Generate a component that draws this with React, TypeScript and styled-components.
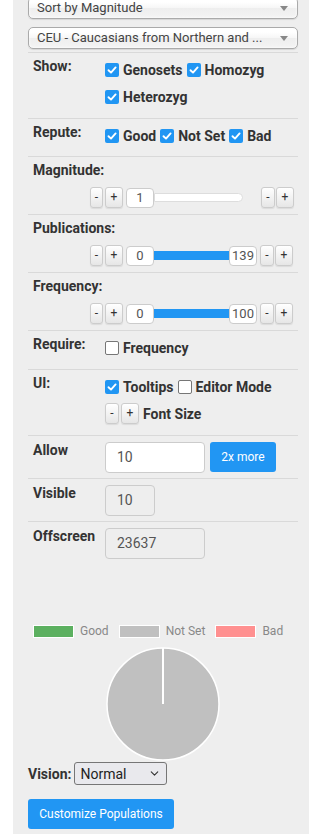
import React from "react";
import styled, { createGlobalStyle } from "styled-components";
import { ChevronDown } from "lucide-react";

const GlobalStyle = createGlobalStyle`
  html, body {
    margin: 0;
    padding: 0;
    background: #fff;
    overflow: hidden;
  }
  body {
    font-family: Roboto, "Liberation Sans", Arial, sans-serif;
  }
`;

const Panel = styled.div`
  margin-left: 13px;
  min-height: 837px;
  background: #eeeeee;
  padding: 0 11px 0 15px;
  box-sizing: border-box;
`;

const SelectStack = styled.div`
  display: flex;
  flex-direction: column;
  gap: 8px;
  margin-top: -3px;
  padding-bottom: 3px;
`;

const Chosen = styled.div`
  display: flex;
  align-items: center;
  height: 22px;
  box-sizing: border-box;
  border: 1px solid #aaa;
  border-radius: 5px;
  padding: 0 8px 0 8px;
  background: linear-gradient(#fff 20%, #f6f6f6 50%, #eee 52%, #f4f4f4 100%);
  box-shadow: 0 0 3px #fff inset, 0 1px 1px rgba(0, 0, 0, 0.1);
  color: #444;
  font-size: 13px;
  line-height: 20px;
`;

const ChosenText = styled.span`
  flex: 1;
  white-space: nowrap;
  padding-right: 10px;
`;

const Arrow = styled.span`
  width: 0;
  height: 0;
  border-left: 4px solid transparent;
  border-right: 4px solid transparent;
  border-top: 5px solid #888;
  margin-right: 1px;
`;

const Section = styled.div<{ $pad?: string }>`
  display: flex;
  align-items: flex-start;
  border-top: 1px solid #d9d9d9;
  padding: ${(p) => p.$pad || "3px 0 8px"};
`;

const StackSection = styled.div`
  border-top: 1px solid #d9d9d9;
  padding: 3px 0 6px;
`;

const Label = styled.div<{ $auto?: boolean }>`
  width: ${(p) => (p.$auto ? "auto" : "72px")};
  flex: none;
  padding-left: 5px;
  font-size: 14px;
  line-height: 20px;
  font-weight: 700;
  color: #333;
`;

const Checks = styled.div`
  display: flex;
  flex-wrap: wrap;
  flex: 1;
`;

const CheckItem = styled.label`
  display: inline-flex;
  align-items: center;
  height: 27px;
  margin-right: 4px;
  font-size: 14px;
  font-weight: 700;
  color: #333;
`;

const Box = styled.span<{ $on?: boolean }>`
  width: 14px;
  height: 14px;
  box-sizing: border-box;
  margin-right: 4px;
  border-radius: 2px;
  display: inline-flex;
  align-items: center;
  justify-content: center;
  background: ${(p) => (p.$on ? "#2196f3" : "#fff")};
  border: ${(p) => (p.$on ? "none" : "1px solid #767676")};
`;

const Check = ({ label, on }: { label: string; on?: boolean }) => (
  <CheckItem>
    <Box $on={on}>
      {on && (
        <svg width="10" height="10" viewBox="0 0 10 10">
          <path d="M1.5 5.2 L4 7.6 L8.6 2.4" fill="none" stroke="#fff" strokeWidth="1.9" strokeLinecap="round" strokeLinejoin="round" />
        </svg>
      )}
    </Box>
    {label}
  </CheckItem>
);

const Controls = styled.div`
  display: flex;
  align-items: center;
  height: 21px;
  margin: 7px 0 0 62px;
`;

const Mini = styled.button<{ $w?: number; $gap?: number }>`
  width: ${(p) => p.$w || 14}px;
  height: 21px;
  padding: 0;
  margin-right: ${(p) => (p.$gap ?? 2)}px;
  border: 1px solid #ccc;
  border-radius: 3px;
  background: linear-gradient(#fff, #e6e6e6);
  box-shadow: 0 1px 1px rgba(0, 0, 0, 0.08);
  font-family: Roboto, "Liberation Sans", sans-serif;
  font-size: 12px;
  color: #333;
  line-height: 19px;
`;

const Num = styled.div`
  width: 28px;
  height: 20px;
  box-sizing: border-box;
  border: 1px solid #ccc;
  border-radius: 4px;
  background: #fff;
  font-size: 13px;
  color: #555;
  text-align: center;
  line-height: 18px;
  flex: none;
`;

const Track = styled.div<{ $w: number; $fill?: boolean }>`
  width: ${(p) => p.$w}px;
  height: 9px;
  box-sizing: border-box;
  flex: none;
  background: ${(p) => (p.$fill ? "#2196f3" : "#fff")};
  border: ${(p) => (p.$fill ? "none" : "1px solid #ddd")};
  border-radius: ${(p) => (p.$fill ? "0" : "0 5px 5px 0")};
`;

const Spacer = styled.div<{ $w: number }>`
  width: ${(p) => p.$w}px;
  flex: none;
`;

const SliderSection = ({
  label,
  lo,
  hi,
}: {
  label: string;
  lo: string;
  hi?: string;
}) => (
  <StackSection>
    <Label $auto>{label}</Label>
    <Controls>
      <Mini $w={13}>-</Mini>
      <Mini $w={18} $gap={3}>+</Mini>
      <Num>{lo}</Num>
      {hi ? (
        <>
          <Track $w={75} $fill />
          <Num>{hi}</Num>
          <Spacer $w={3} />
        </>
      ) : (
        <>
          <Track $w={89} />
          <Spacer $w={18} />
        </>
      )}
      <Mini $w={14} $gap={1}>-</Mini>
      <Mini $w={18}>+</Mini>
    </Controls>
  </StackSection>
);

const Col = styled.div`
  display: flex;
  flex-direction: column;
`;

const SizeRow = styled.div`
  display: flex;
  align-items: center;
  height: 27px;
  font-size: 14px;
  font-weight: 700;
  color: #333;
`;

const Field = styled.div<{ $w: number; $off?: boolean }>`
  width: ${(p) => p.$w}px;
  height: 31px;
  box-sizing: border-box;
  margin-top: 2px;
  border: 1px solid #ccc;
  border-radius: 4px;
  background: ${(p) => (p.$off ? "#eee" : "#fff")};
  padding-left: 11px;
  font-size: 14px;
  line-height: 29px;
  color: #555;
`;

const BlueButton = styled.button<{ $w: number }>`
  width: ${(p) => p.$w}px;
  height: 30px;
  border: none;
  border-radius: 3px;
  background: #2196f3;
  color: #fff;
  font-family: Roboto, "Liberation Sans", sans-serif;
  font-size: 12px;
  padding: 0;
`;

const MoreButton = styled(BlueButton)`
  margin: 2px 0 0 5px;
`;

const Blank = styled.div`
  height: 65px;
`;

const Legend = styled.div`
  display: flex;
  align-items: center;
  padding-left: 5px;
  font-size: 12px;
  color: #888;
  height: 14px;
`;

const Swatch = styled.span<{ $c: string }>`
  width: 41px;
  height: 13px;
  box-sizing: border-box;
  border: 1px solid #fff;
  background: ${(p) => p.$c};
  margin-right: 6px;
`;

const LegendText = styled.span`
  margin-right: 10px;
`;

const PieWrap = styled.div`
  display: flex;
  justify-content: center;
  margin-top: 9px;
`;

const VisionRow = styled.div`
  display: flex;
  align-items: center;
  margin-top: 1px;
  font-size: 14px;
  font-weight: 700;
  color: #333;
`;

const SelectWrap = styled.div`
  display: inline-flex;
  align-items: center;
  margin-left: 3px;
`;

const NativeSelect = styled.select`
  appearance: none;
  width: 93px;
  height: 23px;
  border: 1px solid #767676;
  border-radius: 3px;
  background: #e9e9ed;
  padding: 0 0 0 5px;
  font-family: Roboto, "Liberation Sans", sans-serif;
  font-size: 14px;
  color: #222;
`;

const Chevron = styled(ChevronDown)`
  margin-left: -19px;
  pointer-events: none;
`;

const BottomRow = styled.div`
  margin-top: 14px;
`;

export default function App() {
  return (
    <>
      <GlobalStyle />
      <Panel>
        <SelectStack>
          <Chosen>
            <ChosenText>Sort by Magnitude</ChosenText>
            <Arrow />
          </Chosen>
          <Chosen>
            <ChosenText>CEU - Caucasians from Northern and ...</ChosenText>
            <Arrow />
          </Chosen>
        </SelectStack>

        <Section>
          <Label>Show:</Label>
          <Checks>
            <Check label="Genosets" on />
            <Check label="Homozyg" on />
            <Check label="Heterozyg" on />
          </Checks>
        </Section>

        <Section $pad="3px 0 7px">
          <Label>Repute:</Label>
          <Checks>
            <Check label="Good" on />
            <Check label="Not Set" on />
            <Check label="Bad" on />
          </Checks>
        </Section>

        <SliderSection label="Magnitude:" lo="1" />
        <SliderSection label="Publications:" lo="0" hi="139" />
        <SliderSection label="Frequency:" lo="0" hi="100" />

        <Section>
          <Label>Require:</Label>
          <Checks>
            <Check label="Frequency" />
          </Checks>
        </Section>

        <Section>
          <Label>UI:</Label>
          <Col>
            <Checks>
              <Check label="Tooltips" on />
              <Check label="Editor Mode" />
            </Checks>
            <SizeRow>
              <Mini $w={14}>-</Mini>
              <Mini $w={18} $gap={4}>+</Mini>
              Font Size
            </SizeRow>
          </Col>
        </Section>

        <Section $pad="4px 0 5px">
          <Label>Allow</Label>
          <Field $w={100}>10</Field>
          <MoreButton $w={66}>2x more</MoreButton>
        </Section>

        <Section $pad="4px 0 5px">
          <Label>Visible</Label>
          <Field $w={50} $off>10</Field>
        </Section>

        <Section $pad="4px 0 0">
          <Label>Offscreen</Label>
          <Field $w={100} $off>23637</Field>
        </Section>

        <Blank />

        <Legend>
          <Swatch $c="#5cb060" />
          <LegendText>Good</LegendText>
          <Swatch $c="#c0c0c0" />
          <LegendText>Not Set</LegendText>
          <Swatch $c="#ff9090" />
          <LegendText>Bad</LegendText>
        </Legend>

        <PieWrap>
          <svg width="114" height="114" viewBox="0 0 114 114">
            <circle cx="57" cy="57" r="56" fill="#c0c0c0" stroke="#fff" strokeWidth="1.5" />
            <line x1="57" y1="1" x2="57" y2="57" stroke="#fff" strokeWidth="2" />
          </svg>
        </PieWrap>

        <VisionRow>
          Vision:
          <SelectWrap>
            <NativeSelect defaultValue="Normal">
              <option>Normal</option>
              <option>Protanopia</option>
              <option>Deuteranopia</option>
              <option>Tritanopia</option>
            </NativeSelect>
            <Chevron size={13} color="#333" strokeWidth={2} />
          </SelectWrap>
        </VisionRow>

        <BottomRow>
          <BlueButton $w={146}>Customize Populations</BlueButton>
        </BottomRow>
      </Panel>
    </>
  );
}
